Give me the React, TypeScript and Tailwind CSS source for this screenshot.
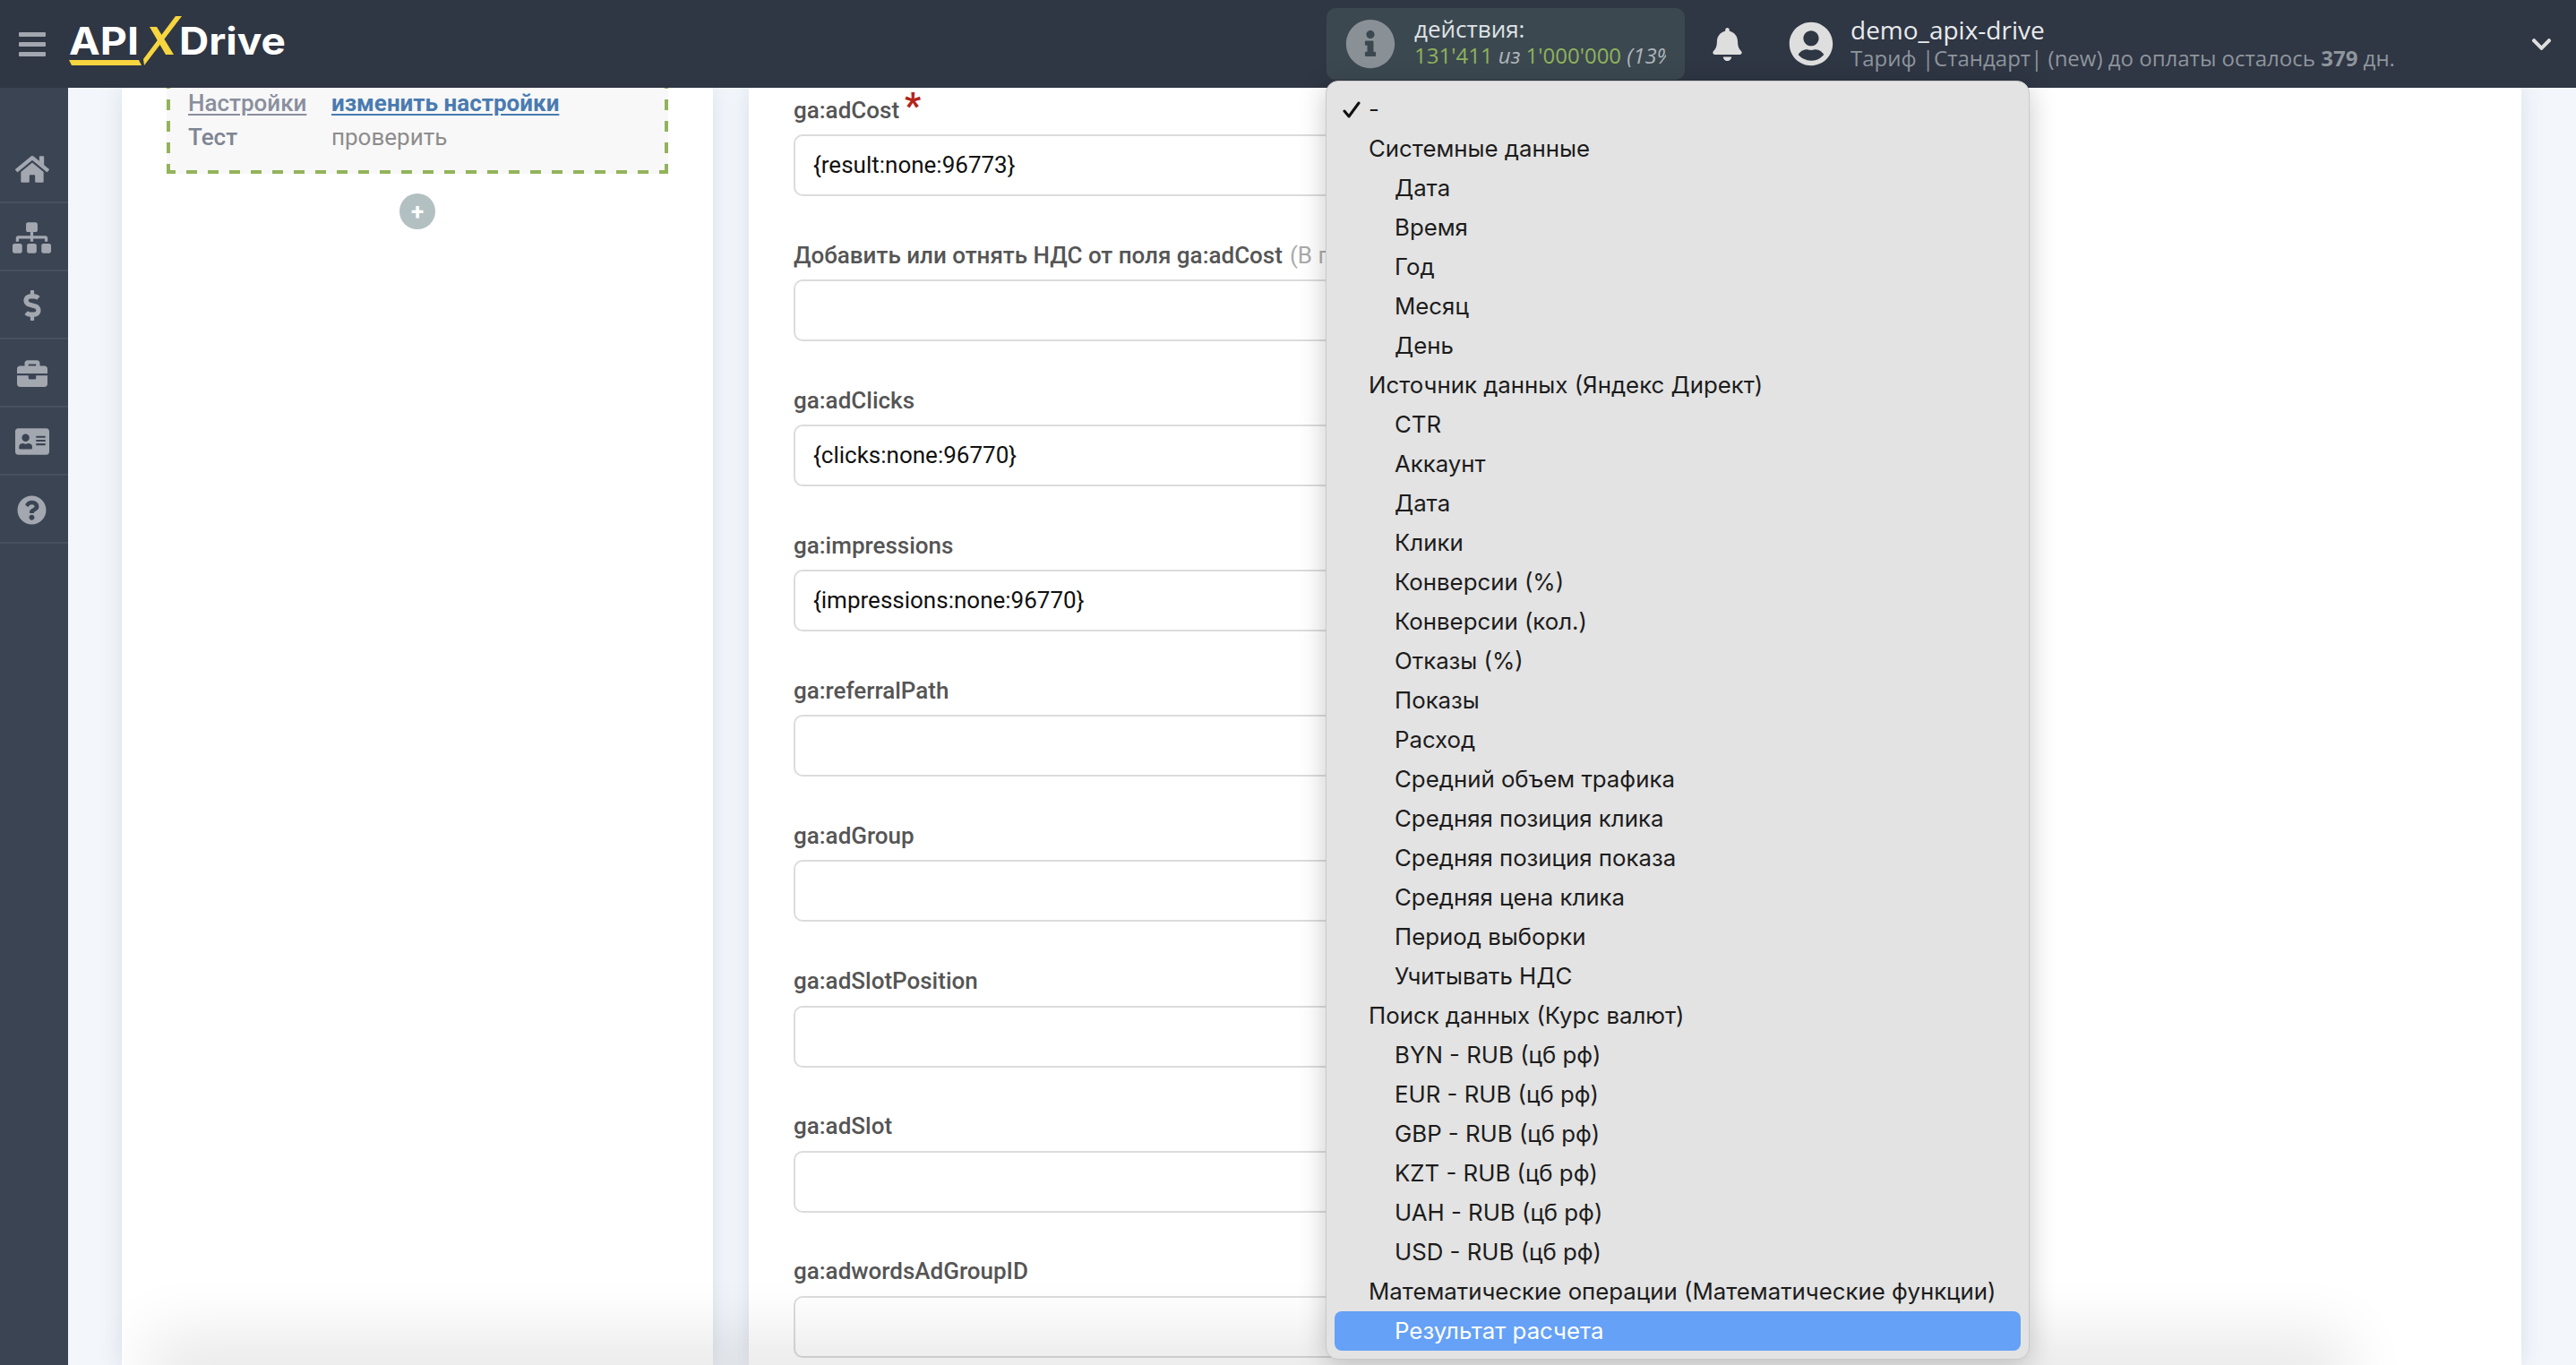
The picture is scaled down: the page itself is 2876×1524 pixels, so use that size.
import React from "react";
import {
  FaHome,
  FaSitemap,
  FaDollarSign,
  FaBriefcase,
  FaAddressCard,
  FaQuestionCircle,
  FaInfoCircle,
  FaBell,
  FaUserCircle,
  FaChevronDown,
} from "react-icons/fa";

const roboto = "font-['Roboto','Liberation_Sans',sans-serif]";
const open = "font-['Open_Sans','Noto_Sans',sans-serif]";

const nav = [
  { Icon: FaHome, size: 38 },
  { Icon: FaSitemap, size: 43 },
  { Icon: FaDollarSign, size: 34 },
  { Icon: FaBriefcase, size: 34 },
  { Icon: FaAddressCard, size: 38 },
  { Icon: FaQuestionCircle, size: 33 },
];

const fields: { label: string; value?: string; star?: boolean; note?: string }[] = [
  { label: "ga:adCost", value: "{result:none:96773}", star: true },
  { label: "Добавить или отнять НДС от поля ga:adCost", note: "(В процентах, например 20 или -20)" },
  { label: "ga:adClicks", value: "{clicks:none:96770}" },
  { label: "ga:impressions", value: "{impressions:none:96770}" },
  { label: "ga:referralPath" },
  { label: "ga:adGroup" },
  { label: "ga:adSlotPosition" },
  { label: "ga:adSlot" },
  { label: "ga:adwordsAdGroupID" },
];

const options: { t: string; level: number }[] = [
  { t: "Системные данные", level: 0 },
  { t: "Дата", level: 1 },
  { t: "Время", level: 1 },
  { t: "Год", level: 1 },
  { t: "Месяц", level: 1 },
  { t: "День", level: 1 },
  { t: "Источник данных (Яндекс Директ)", level: 0 },
  { t: "CTR", level: 1 },
  { t: "Аккаунт", level: 1 },
  { t: "Дата", level: 1 },
  { t: "Клики", level: 1 },
  { t: "Конверсии (%)", level: 1 },
  { t: "Конверсии (кол.)", level: 1 },
  { t: "Отказы (%)", level: 1 },
  { t: "Показы", level: 1 },
  { t: "Расход", level: 1 },
  { t: "Средний объем трафика", level: 1 },
  { t: "Средняя позиция клика", level: 1 },
  { t: "Средняя позиция показа", level: 1 },
  { t: "Средняя цена клика", level: 1 },
  { t: "Период выборки", level: 1 },
  { t: "Учитывать НДС", level: 1 },
  { t: "Поиск данных (Курс валют)", level: 0 },
  { t: "BYN - RUB (цб рф)", level: 1 },
  { t: "EUR - RUB (цб рф)", level: 1 },
  { t: "GBP - RUB (цб рф)", level: 1 },
  { t: "KZT - RUB (цб рф)", level: 1 },
  { t: "UAH - RUB (цб рф)", level: 1 },
  { t: "USD - RUB (цб рф)", level: 1 },
  { t: "Математические операции (Математические функции)", level: 0 },
];

function Logo() {
  return (
    <svg width="260" height="98" viewBox="70 0 260 98" className="ml-[19px] shrink-0">
      <text x="77" y="61" fill="#ffffff" fontFamily="Inter, sans-serif" fontWeight="700" fontSize="42" textLength="78" lengthAdjust="spacingAndGlyphs">
        API
      </text>
      <text x="200" y="61" fill="#ffffff" fontFamily="Inter, sans-serif" fontWeight="700" fontSize="42" textLength="119" lengthAdjust="spacingAndGlyphs">
        Drive
      </text>
      <polygon points="167,30 175,30 194,61 185,61" fill="#f6d53f" />
      <polygon points="196,18 203,18 161,73 160,66" fill="#f6d53f" />
      <polygon points="77,67 155,67 158,73 80,73" fill="#f6d53f" />
    </svg>
  );
}

function Field({ f }: { f: (typeof fields)[number] }) {
  return (
    <div className="h-[162.1px] shrink-0">
      <div className="flex h-[38px] items-center whitespace-nowrap text-[26px] font-medium text-[#555555]">
        <span>{f.label}</span>
        {f.star && <span className="ml-[6px] -mt-[8px] text-[40px] leading-none font-bold text-[#b5231a]">*</span>}
        {f.note && <span className="ml-[8px] font-normal text-[#aaaaaa]">{f.note}</span>}
      </div>
      <div className="mt-[8px] flex h-[69px] w-[1200px] items-center rounded-[10px] border-2 border-[#dcdcdc] bg-white pl-[20px] text-[26px] text-[#111111]">
        {f.value}
      </div>
    </div>
  );
}

export default function App() {
  return (
    <div className={`relative flex h-screen w-full flex-col overflow-hidden bg-[#f3f7fc] ${roboto}`}>
      <header className="relative z-20 flex h-[98px] shrink-0 items-center bg-[#2f3644]">
        <div className="ml-[21px] flex w-[30px] shrink-0 flex-col gap-[6px]">
          <span className="h-[5px] rounded-[1px] bg-[#a2a6ae]" />
          <span className="h-[5px] rounded-[1px] bg-[#a2a6ae]" />
          <span className="h-[5px] rounded-[1px] bg-[#a2a6ae]" />
        </div>
        <Logo />
        <div className={`ml-[1151px] flex h-[80px] w-[400px] shrink-0 items-center rounded-[10px] bg-[#3c4850] pl-[21px] ${open}`}>
          <FaInfoCircle size={56} color="#8a9196" className="shrink-0" />
          <div className="ml-[21px] -mt-[4px] w-[281px] overflow-hidden whitespace-nowrap">
            <div className="text-[26px] leading-[30px] text-[#dfe3e6]">действия:</div>
            <div className="text-[24px] leading-[30px] text-[#8fb35c]">
              131'411 <i className="text-[#b0b6ba]">из</i> 1'000'000 <i className="text-[#b0b6ba]">(13%)</i>
            </div>
          </div>
        </div>
        <FaBell size={37} color="#dedede" className="ml-[29px] shrink-0" />
        <FaUserCircle size={50} color="#dedede" className="ml-[50px] shrink-0" />
        <div className={`ml-[19px] -mt-[1px] whitespace-nowrap ${open}`}>
          <div className="text-[28px] leading-[33px] text-[#e8eaec]">demo_apix-drive</div>
          <div className="text-[24px] leading-[30px] text-[#8e959c]">
            Тариф |Стандарт| (new) до оплаты осталось <b>379</b> дн.
          </div>
        </div>
        <FaChevronDown size={25} color="#dedede" className="ml-auto mr-[26px] shrink-0" />
      </header>

      <div className="flex min-h-0 flex-1">
        <aside className="w-[76px] shrink-0 bg-[#3a4453] pt-[53px]">
          {nav.map(({ Icon, size }, i) => (
            <div key={i} className="flex h-[76px] items-center justify-center border-b-2 border-[#465160] pr-[5px] pt-[2px]">
              <Icon size={size} color="#a3a7af" />
            </div>
          ))}
        </aside>

        <main className="flex min-w-0 flex-1 gap-[40px] pl-[60px] pr-[61px]">
          <section className="relative w-[660px] shrink-0 overflow-hidden bg-white shadow-[0_0_24px_rgba(50,60,90,0.13)]">
            <div className="ml-[50px] -mt-[8px] h-[104px] w-[560px] bg-[#f8f8f8] pt-[6px] pl-[24px] [background-image:repeating-linear-gradient(90deg,#93b35b_0,#93b35b_10px,transparent_10px,transparent_22px,#93b35b_22px,#93b35b_24px),repeating-linear-gradient(180deg,#93b35b_0,#93b35b_9px,transparent_9px,transparent_21px,#93b35b_21px,#93b35b_24px),repeating-linear-gradient(180deg,#93b35b_0,#93b35b_9px,transparent_9px,transparent_21px,#93b35b_21px,#93b35b_24px)] [background-position:0_100%,0_0,100%_0] [background-size:100%_4px,4px_100%,4px_100%] bg-no-repeat">
              <div className="flex h-[38px] items-center text-[26px]">
                <span className="w-[160px] font-medium text-[#8a8f9e] underline underline-offset-[3px]">Настройки</span>
                <span className="font-bold text-[#4a7bb0] underline underline-offset-[3px]">изменить настройки</span>
              </div>
              <div className="flex h-[38px] items-center text-[26px]">
                <span className="w-[160px] font-medium text-[#7f8594]">Тест</span>
                <span className="text-[#8d8d8d]">проверить</span>
              </div>
            </div>
            <div className="ml-[310px] mt-[22px] flex h-[40px] w-[40px] items-center justify-center rounded-full bg-[#b3c0c2] text-[26px] font-bold leading-none text-white">
              +
            </div>
          </section>

          <section className="min-w-0 flex-1 overflow-hidden bg-white pl-[50px] pt-[6px] shadow-[0_0_24px_rgba(50,60,90,0.13)]">
            {fields.map((f) => (
              <Field key={f.label} f={f} />
            ))}
          </section>
        </main>
      </div>

      <div className="pointer-events-none absolute -bottom-[20px] left-[200px] right-[290px] z-10 h-[20px] shadow-[0_0_70px_35px_rgba(0,0,0,0.09)]" />

      <div className="absolute left-[1480px] top-[90px] z-30 h-[1428px] w-[786px] rounded-[14px] border border-[#c9c9c9] bg-[#e3e3e3] px-[9px] pt-[9px] font-['Inter',sans-serif] text-[25.8px] text-[#1c1c1c] shadow-[0_6px_30px_rgba(0,0,0,0.22)]">
        <div className="relative flex h-[44px] items-center pl-[38px] pt-[1px]">
          <svg width="20" height="20" viewBox="0 0 20 20" className="absolute left-[9px] top-[13px]">
            <path d="M2 11 L7 17 L18 2" fill="none" stroke="#111111" strokeWidth="3" strokeLinecap="round" strokeLinejoin="round" />
          </svg>
          -
        </div>
        {options.map((o, i) => (
          <div key={i} className={`flex h-[44px] items-center whitespace-nowrap pt-[1px] ${o.level ? "pl-[67px]" : "pl-[38px]"}`}>
            {o.t}
          </div>
        ))}
        <div className="flex h-[44px] items-center rounded-[8px] bg-[#65a1f6] pl-[67px] pt-[1px] text-white">Результат расчета</div>
      </div>
    </div>
  );
}
